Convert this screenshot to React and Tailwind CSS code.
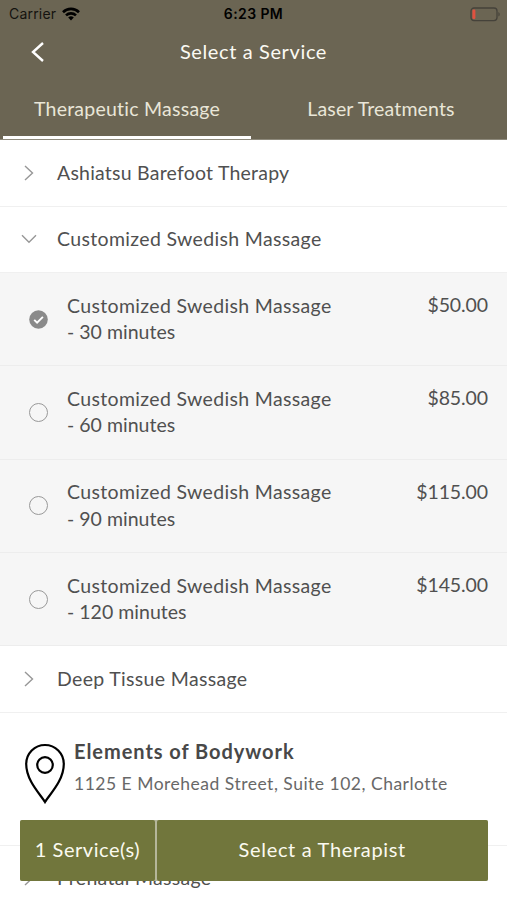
import React, { useState } from 'react';
import { clsx } from 'clsx';

const TABS = [
  { id: 'massage', label: 'Therapeutic Massage', tracking: 'tracking-[0.24px]' },
  { id: 'laser', label: 'Laser Treatments', tracking: 'tracking-[0.15px]' },
];

const OPTIONS = [
  { id: 30, price: '$50.00' },
  { id: 60, price: '$85.00' },
  { id: 90, price: '$115.00' },
  { id: 120, price: '$145.00' },
];

function StatusBar() {
  return (
    <div className="flex h-7 items-center justify-between pl-[9px] pr-[6px] font-['Inter','Liberation_Sans',sans-serif] text-[#14130f]">
      <div className="flex w-[100px] items-center gap-[6px]">
        <span className="text-[14px] leading-none tracking-[0.2px]">Carrier</span>
        <svg width="18" height="14" viewBox="0 0 18 14" fill="none" stroke="#000" strokeWidth="2.6">
          <path d="M1 5.2a11.4 11.4 0 0 1 16 0" />
          <path d="M4 8.4a7.2 7.2 0 0 1 10 0" />
          <path d="M9 13.4L6.2 10.6a4 4 0 0 1 5.6 0z" fill="#000" stroke="none" />
        </svg>
      </div>
      <span className="mr-[3px] text-[14px] font-semibold leading-none tracking-[0.4px] text-black">6:23 PM</span>
      <div className="flex w-[100px] justify-end">
        <svg width="31" height="15" viewBox="0 0 31 15" fill="none">
          <rect x="1" y="1" width="26" height="12.6" rx="3" stroke="#45423a" strokeWidth="1.3" />
          <rect x="2.4" y="2.6" width="3" height="9.4" rx="1.2" fill="#e0513f" />
          <path d="M28.4 5v4.6c1.8-.8 1.8-3.8 0-4.6z" fill="#45423a" />
        </svg>
      </div>
    </div>
  );
}

function Header({ tab, onTab }) {
  return (
    <header className="flex h-[140px] flex-col border-b border-[#8d897b] bg-[#6b6553]">
      <StatusBar />
      <div className="grid h-12 grid-cols-[100px_1fr_100px] items-center">
        <button className="pl-[31px]" aria-label="Back">
          <svg width="14" height="20" viewBox="0 0 14 20" fill="none" stroke="#fff" strokeWidth="2.4">
            <path d="M12 1L2 10l10 9" />
          </svg>
        </button>
        <h1 className="pb-[2px] text-center text-[20px] leading-none tracking-[0.62px] text-[#fbfaf3]">
          Select a Service
        </h1>
      </div>
      <nav className="grid flex-1 grid-cols-2 pl-[3px]">
        {TABS.map((t) => (
          <button
            key={t.id}
            onClick={() => onTab(t.id)}
            className={clsx(
              'border-b-[3px] pt-[5px] text-[19.5px] text-[#e9e6d8]',
              t.tracking,
              tab === t.id ? 'mr-[4px] border-white' : 'border-transparent',
            )}
          >
            {t.label}
          </button>
        ))}
      </nav>
    </header>
  );
}

function CategoryRow({ label, open, className }) {
  return (
    <div className="flex h-[66.5px] items-center border-b border-[#f0f0f0] pl-[20px]">
      <svg width="18" height="18" viewBox="0 0 18 18" fill="none" stroke="#979797" strokeWidth="1.4">
        <path d={open ? 'M2 5.3l7 7 7-7' : 'M5 2l7.5 7L5 16'} />
      </svg>
      <span className={clsx('pb-px pl-[19px] text-[19.5px] leading-none text-[#505050]', className)}>{label}</span>
    </div>
  );
}

function OptionRow({ minutes, price, selected, onSelect }) {
  return (
    <div
      onClick={onSelect}
      className="flex h-[93.3px] items-center border-b border-[#ededed] bg-[#f6f6f6] pl-[29px] pr-[19px] text-[19.5px] leading-[26.5px] text-[#505050]"
    >
      {selected ? (
        <svg className="shrink-0" width="19" height="19" viewBox="0 0 19 19" fill="none">
          <circle cx="9.5" cy="9.5" r="9.3" fill="#8a8a8a" />
          <path d="M5.2 9.8l2.9 2.9 5.8-5.8" stroke="#fff" strokeWidth="1.9" />
        </svg>
      ) : (
        <span className="size-[19px] shrink-0 rounded-full border-[1.5px] border-[#999999]" />
      )}
      <p className="flex-1 pl-[19px] tracking-[0.34px]">
        Customized Swedish Massage
        <br />
        <span className="tracking-[0.02px]">- {minutes} minutes</span>
      </p>
      <span className="self-start pt-[19px] tracking-[-0.1px]">{price}</span>
    </div>
  );
}

function LocationCard() {
  return (
    <div className="flex h-[133px] items-start border-b border-[#f0f0f0] pl-[24px] pt-[25px]">
      <svg className="mt-[5px] shrink-0" width="42" height="61" viewBox="0 0 42 61" fill="none" stroke="#000" strokeWidth="2.2">
        <path d="M21 59C17 52 2.200 38 2.200 21A18.800 19 0 0 1 39.800 21C39.800 38 25 52 21 59z" />
        <circle cx="21" cy="22" r="7.800" />
      </svg>
      <div className="pl-[8px]">
        <div className="text-[20px] font-bold leading-[26px] tracking-[0.95px] text-[#484848]">Elements of Bodywork</div>
        <div className="pt-[7px] text-[17.5px] leading-[26px] tracking-[0.5px] text-[#686868]">
          1125 E Morehead Street, Suite 102, Charlotte
        </div>
      </div>
    </div>
  );
}

function BottomBar() {
  return (
    <div className="absolute left-5 top-[820px] flex h-[60.5px] w-[468px] gap-[1.5px] rounded-[2px] bg-[#b5b69a] text-[20px] text-[#fbfaf0]">
      <button className="w-[135px] rounded-[2px] bg-[#71763c] pb-[2px] tracking-[0.55px]">1 Service(s)</button>
      <button className="flex-1 rounded-[2px] bg-[#71763c] pb-[2px] tracking-[0.68px]">Select a Therapist</button>
    </div>
  );
}

export default function App() {
  const [tab, setTab] = useState('massage');
  const [selected, setSelected] = useState(30);

  return (
    <div className="relative h-[900px] w-[507px] overflow-hidden bg-white font-['Lato','Liberation_Sans',sans-serif]">
      <Header tab={tab} onTab={setTab} />
      <CategoryRow label="Ashiatsu Barefoot Therapy" className="tracking-[0.22px]" />
      <CategoryRow label="Customized Swedish Massage" open className="tracking-[0.34px]" />
      {OPTIONS.map((o) => (
        <OptionRow
          key={o.id}
          minutes={o.id}
          price={o.price}
          selected={selected === o.id}
          onSelect={() => setSelected(o.id)}
        />
      ))}
      <CategoryRow label="Deep Tissue Massage" className="tracking-[0.33px]" />
      <LocationCard />
      <CategoryRow label="Prenatal Massage" className="tracking-[0.3px]" />
      <BottomBar />
    </div>
  );
}
